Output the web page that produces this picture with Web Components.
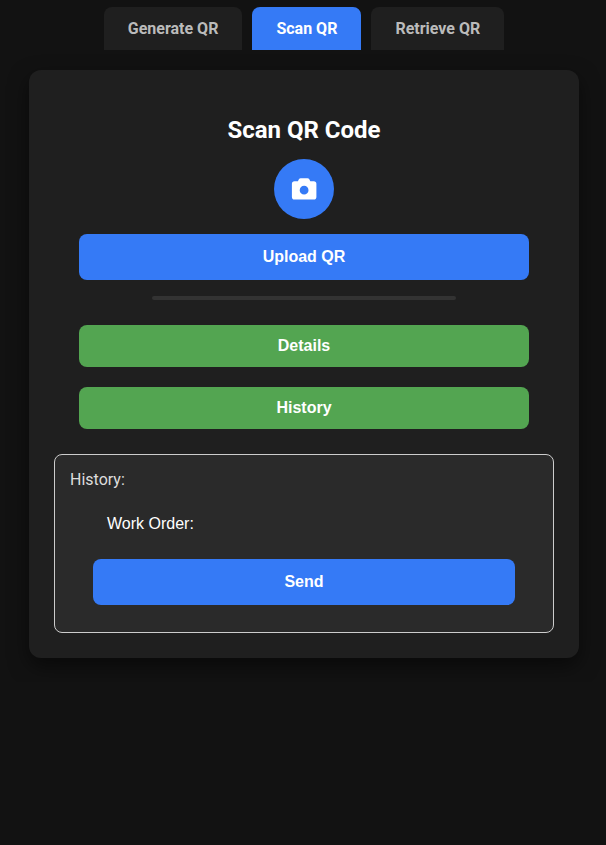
<!DOCTYPE html>
<html lang="en">
<head>
<meta charset="utf-8">
<meta name="viewport" content="width=device-width, initial-scale=1">
<title>Scan QR</title>
<style>
  body {
    margin: 0;
    padding: 7px 8px 24px 10px;
    background: #121212;
    color: #fff;
    font: 16px/19px Roboto, sans-serif;
  }
</style>
</head>
<body>
<qr-app></qr-app>

<script>
class BaseElement extends HTMLElement {
  constructor() {
    super();
    this.attachShadow({ mode: "open" }).innerHTML = this.render();
  }
}

customElements.define("qr-tab", class extends BaseElement {
  render() {
    return `
      <style>
        :host { display: block; }
        button {
          padding: 12px 24px;
          border: 0;
          border-radius: 8px 8px 0 0;
          background: #1f1f1f;
          color: #bbb;
          font: bold 16px/19px Roboto, sans-serif;
          cursor: pointer;
        }
        :host([active]) button { background: #357af6; color: #fff; }
      </style>
      <button type="button"><slot></slot></button>`;
  }
});

customElements.define("qr-button", class extends BaseElement {
  render() {
    return `
      <style>
        :host { display: block; }
        button {
          width: 100%;
          padding: 14px 20px;
          border: 0;
          border-radius: 8px;
          background: #357af6;
          color: #fff;
          font: bold 16px/18px "Liberation Sans", Arial, sans-serif;
          cursor: pointer;
        }
        :host([kind="success"]) button { padding: 12px 20px; background: #53a551; }
      </style>
      <button type="button"><slot></slot></button>`;
  }
});

customElements.define("camera-button", class extends BaseElement {
  render() {
    return `
      <style>
        :host { display: block; }
        button {
          display: grid;
          place-items: center;
          width: 60px;
          height: 60px;
          padding: 0;
          border: 0;
          border-radius: 50%;
          background: #357af6;
          color: #fff;
          cursor: pointer;
        }
        svg { display: block; }
      </style>
      <button type="button" aria-label="Open camera">
        <svg width="26" height="24" viewBox="0 0 26 24" aria-hidden="true">
          <path fill="currentColor" fill-rule="evenodd" d="M9.7 1.2h6.8c.8 0 1.4.4 1.8 1.1l1 1.9h3.5c1.6 0 2.6 1 2.6 2.6v13.1c0 1.6-1 2.6-2.6 2.6H3.5c-1.6 0-2.6-1-2.6-2.6V6.8c0-1.6 1-2.6 2.6-2.6h3.4l1-1.9c.4-.7 1-1.1 1.8-1.1ZM13.100 8.800a4.400 4.400 0 1 0 0 8.800a4.400 4.400 0 0 0 0-8.800Z"/>
        </svg>
      </button>`;
  }
});

customElements.define("qr-history", class extends BaseElement {
  render() {
    return `
      <style>
        :host {
          display: block;
          padding: 15px 15px 27px;
          border: 1px solid #ccc;
          border-radius: 8px;
          background: #2a2a2a;
          color: #ddd;
        }
        .entry { padding: 0 23px; }
        p {
          margin: 26px 0;
          padding: 0 14px;
          color: #fff;
          font: 16px/18px "Liberation Sans", Arial, sans-serif;
        }
      </style>
      <div>History:</div>
      <div class="entry">
        <p>Work Order:</p>
        <qr-button>Send</qr-button>
      </div>`;
  }
});

customElements.define("qr-card", class extends BaseElement {
  render() {
    return `
      <style>
        :host {
          display: block;
          box-sizing: border-box;
          width: 100%;
          max-width: 550px;
          padding: 46px 25px 25px;
          border-radius: 12px;
          background: #1f1f1f;
          box-shadow: 0 8px 20px rgba(0, 0, 0, 0.5);
        }
      </style>
      <slot></slot>`;
  }
});

customElements.define("qr-app", class extends BaseElement {
  render() {
    return `
      <style>
        :host { display: flex; flex-direction: column; align-items: center; gap: 20px; }
        nav { display: flex; gap: 10px; }
        .scan { display: flex; flex-direction: column; align-items: center; padding: 0 25px; }
        h1 { margin: 0 0 14px; font-size: 24px; line-height: 29px; }
        .scan qr-button { align-self: stretch; }
        camera-button { margin-bottom: 15px; }
        hr {
          width: 304px;
          max-width: 100%;
          height: 4px;
          margin: 16px 0 25px;
          border: 0;
          border-radius: 2px;
          background: #333;
        }
        .actions { display: grid; gap: 20px; align-self: stretch; margin-bottom: 25px; }
      </style>
      <nav>
        <qr-tab>Generate QR</qr-tab>
        <qr-tab active>Scan QR</qr-tab>
        <qr-tab>Retrieve QR</qr-tab>
      </nav>
      <qr-card>
        <div class="scan">
          <h1>Scan QR Code</h1>
          <camera-button></camera-button>
          <qr-button>Upload QR</qr-button>
          <hr>
          <div class="actions">
            <qr-button kind="success">Details</qr-button>
            <qr-button kind="success">History</qr-button>
          </div>
        </div>
        <qr-history></qr-history>
      </qr-card>`;
  }
});
</script>
</body>
</html>
